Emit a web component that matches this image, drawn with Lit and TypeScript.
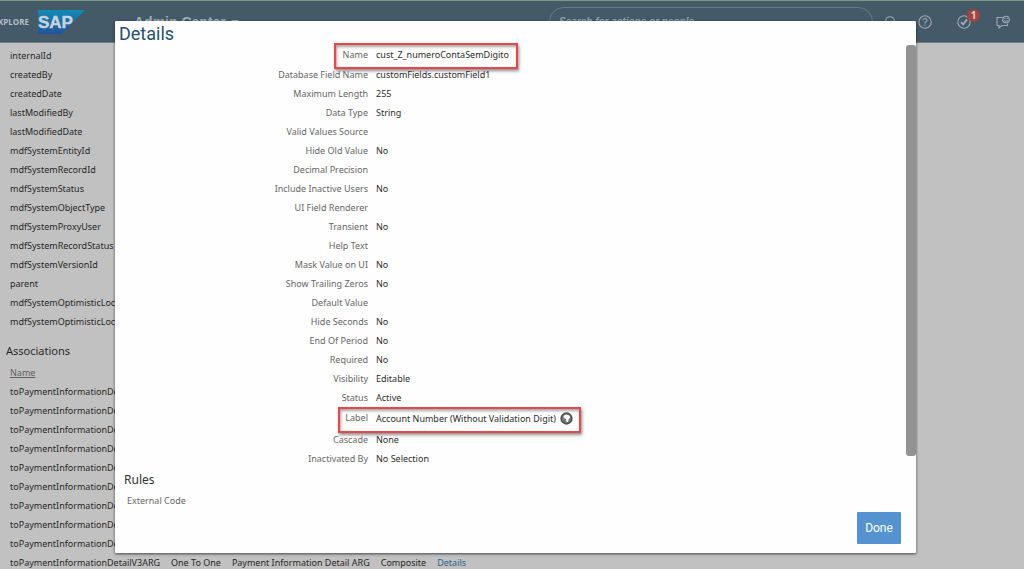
import { LitElement, html, css, svg, nothing } from "lit";
import { customElement, property } from "lit/decorators.js";

interface Field {
  label: string;
  value?: string;
  mark?: "name" | "label";
}

const FIELDS: Field[] = [
  { label: "Name", value: "cust_Z_numeroContaSemDigito", mark: "name" },
  { label: "Database Field Name", value: "customFields.customField1" },
  { label: "Maximum Length", value: "255" },
  { label: "Data Type", value: "String" },
  { label: "Valid Values Source" },
  { label: "Hide Old Value", value: "No" },
  { label: "Decimal Precision" },
  { label: "Include Inactive Users", value: "No" },
  { label: "UI Field Renderer" },
  { label: "Transient", value: "No" },
  { label: "Help Text" },
  { label: "Mask Value on UI", value: "No" },
  { label: "Show Trailing Zeros", value: "No" },
  { label: "Default Value" },
  { label: "Hide Seconds", value: "No" },
  { label: "End Of Period", value: "No" },
  { label: "Required", value: "No" },
  { label: "Visibility", value: "Editable" },
  { label: "Status", value: "Active" },
  { label: "Label", value: "Account Number (Without Validation Digit)", mark: "label" },
  { label: "Cascade", value: "None" },
  { label: "Inactivated By", value: "No Selection" },
];

const SYSTEM_FIELDS = [
  "internalId",
  "createdBy",
  "createdDate",
  "lastModifiedBy",
  "lastModifiedDate",
  "mdfSystemEntityId",
  "mdfSystemRecordId",
  "mdfSystemStatus",
  "mdfSystemObjectType",
  "mdfSystemProxyUser",
  "mdfSystemRecordStatus",
  "mdfSystemVersionId",
  "parent",
  "mdfSystemOptimisticLock",
  "mdfSystemOptimisticLock",
];

const ASSOCIATIONS: string[][] = [
  ...Array.from({ length: 9 }, () => ["toPaymentInformationDetail"]),
  ["toPaymentInformationDetailV3ARG", "One To One", "Payment Information Detail ARG", "Composite"],
];

@customElement("top-bar")
class TopBar extends LitElement {
  static styles = css`
    :host {
      display: block;
    }
    .bar {
      display: flex;
      align-items: center;
      height: 43px;
      box-sizing: border-box;
      border-top: 1px solid #7b9685;
      border-bottom: 1px solid #6d7f8b;
      background: #445a69;
      color: #a9b6bf;
    }
    .explore {
      display: flex;
      justify-content: flex-end;
      width: 29px;
      overflow: hidden;
      font: bold 8px/12px "Open Sans", sans-serif;
      color: #b3bec6;
    }
    .logo {
      margin: 0 0 0 9px;
    }
    .title {
      display: flex;
      align-items: center;
      gap: 5px;
      margin-left: 49px;
      padding: 0;
      border: 0;
      background: none;
      color: #9dadb9;
      font: bold 14px/20px "Liberation Sans", sans-serif;
      white-space: nowrap;
    }
    .search {
      box-sizing: border-box;
      width: 324px;
      height: 29px;
      margin-left: auto;
      padding: 0 9px;
      border: 1px solid #667a88;
      border-radius: 15px;
      background: transparent;
      font: italic bold 10px/20px "Liberation Sans", sans-serif;
    }
    .search::placeholder {
      color: #93a4b0;
      opacity: 1;
    }
    .tools {
      display: flex;
      align-items: center;
      margin-left: 8px;
      padding-right: 12px;
    }
    .tool {
      position: relative;
      display: block;
      width: 18px;
      height: 18px;
      padding: 0;
      border: 0;
      background: none;
    }
    .tool + .tool {
      margin-left: 21px;
    }
    .search-tool + .tool {
      margin-left: 17px;
    }
    .tool svg {
      display: block;
    }
    .badge {
      position: absolute;
      left: 12px;
      top: -4px;
      width: 13px;
      height: 13px;
      border-radius: 50%;
      background: #a3423f;
      color: #dcd0d0;
      font: bold 10px/13px "Open Sans", sans-serif;
      text-align: center;
    }
  `;

  render() {
    const line = (body: unknown) => html`<svg width="18" height="18" viewBox="0 0 18 18" fill="none" stroke="#9aaab5" stroke-width="1.1">${body}</svg>`;
    return html`
      <header class="bar">
        <span class="explore">EXPLORE</span>
        <svg class="logo" width="47" height="24" viewBox="0 0 47 24" role="img" aria-label="SAP">
          <defs>
            <linearGradient id="sap" x1="0" y1="0" x2="0" y2="1">
              <stop offset="0" stop-color="#128bb4" />
              <stop offset="1" stop-color="#22539b" />
            </linearGradient>
          </defs>
          <path d="M0 0H47L23.5 24H0Z" fill="url(#sap)" />
          <text x="0" y="18" font-family="Liberation Sans, sans-serif" font-weight="bold" font-size="17" fill="#c9d3dc" stroke="#c9d3dc" stroke-width="0.4">SAP</text>
        </svg>
        <button class="title">
          Admin Center
          <svg width="8" height="3" viewBox="0 0 8 3"><path d="M0 0H8L4 3Z" fill="#9dadb9" /></svg>
        </button>
        <input class="search" type="search" aria-label="Search" placeholder="Search for actions or people" />
        <div class="tools">
          <button class="tool search-tool" aria-label="Search">
            ${line(svg`<circle cx="9" cy="8" r="4.3"/><path d="M12 11l4 4"/>`)}
          </button>
          <button class="tool" aria-label="Help">
            ${line(svg`<circle cx="9" cy="9" r="6.2"/><path d="M7 7.4C7 4.9 11 4.9 11 7.3C11 8.8 9 8.8 9 10.4M9 11.5V12.8"/>`)}
          </button>
          <button class="tool" aria-label="To-do">
            ${line(svg`<circle cx="9" cy="9" r="6.2"/><path stroke-width="1.9" d="M6 9.2L8.2 11.4L12 6.4"/>`)}
            <span class="badge">1</span>
          </button>
          <button class="tool" aria-label="Feedback">
            ${line(svg`<path d="M8.5 4.5H3V12.5H5V15L7.6 12.5H13.5V10.5"/><circle cx="12" cy="6.5" r="3.3"/><path d="M10.8 4.8V6M13.2 4.8V6M10.3 7.3Q12 9.2 13.7 7.3"/>`)}
          </button>
        </div>
      </header>
    `;
  }
}

@customElement("object-page")
class ObjectPage extends LitElement {
  static styles = css`
    :host {
      display: block;
    }
    .page {
      padding: 3px 6px 0;
      color: #272727;
      font: 9px/19px "Noto Sans", sans-serif;
    }
    table {
      border-collapse: collapse;
      white-space: nowrap;
    }
    td,
    th {
      height: 19px;
      padding: 0 7px 0 4px;
      font-weight: normal;
      text-align: left;
    }
    h2 {
      margin: 11px 0 3px;
      color: #292929;
      font: 11px/18px "Noto Sans", sans-serif;
    }
    .head {
      color: #606060;
      text-decoration: underline;
    }
    a {
      color: #2a648d;
      text-decoration: none;
    }
  `;

  render() {
    return html`
      <main class="page">
        <table>
          ${SYSTEM_FIELDS.map((name) => html`<tr><td>${name}</td></tr>`)}
        </table>
        <h2>Associations</h2>
        <table>
          <tr><th class="head" scope="col">Name</th></tr>
          ${ASSOCIATIONS.map(
            (row) => html`<tr>
              ${row.map((cell) => html`<td>${cell}</td>`)}
              ${row.length > 1 ? html`<td><a href="#details">Details</a></td>` : nothing}
            </tr>`
          )}
        </table>
      </main>
    `;
  }
}

@customElement("details-dialog")
class DetailsDialog extends LitElement {
  @property({ attribute: false }) fields: Field[] = [];

  static styles = css`
    :host {
      display: block;
    }
    .dialog {
      position: relative;
      display: flex;
      flex-direction: column;
      box-sizing: border-box;
      height: 100%;
      background: #fefefe;
      border-radius: 1px;
      box-shadow: 0 1px 3px rgba(0, 0, 0, 0.65);
      color: #2c2c2c;
      font: 9px/19px "Noto Sans", sans-serif;
    }
    h1 {
      margin: 0;
      padding: 2px 4px 0;
      color: #24506f;
      font: 18px/22px "Roboto", sans-serif;
    }
    .body {
      flex: 1;
    }
    dl {
      margin: 0;
    }
    .row {
      position: relative;
      display: grid;
      grid-template-columns: 253px 1fr;
      column-gap: 8px;
      min-height: 19px;
    }
    .row-name {
      min-height: 20px;
    }
    .row-label {
      min-height: 22px;
      margin-top: 1px;
    }
    .row-label dd {
      padding-top: 1px;
    }
    dt {
      color: #666;
      text-align: right;
    }
    dd {
      display: flex;
      align-items: center;
      align-self: start;
      gap: 4px;
      margin: 0;
    }
    .mark {
      position: absolute;
      box-sizing: border-box;
      height: 26px;
      border: 2px solid #e8484b;
      box-shadow: 1px 2px 3px rgba(0, 0, 0, 0.45), inset 1px 2px 3px rgba(0, 0, 0, 0.35);
    }
    .mark-name {
      left: 219px;
      top: -2px;
      width: 184px;
    }
    .mark-label {
      left: 223px;
      top: -1px;
      width: 243px;
    }
    .globe {
      display: block;
      width: 13px;
      height: 13px;
      padding: 0;
      border: 0;
      background: none;
    }
    .globe svg {
      display: block;
    }
    h2 {
      margin: 3px 0 2px 9px;
      color: #333;
      font: 12px/18px "Noto Sans", sans-serif;
    }
    .code {
      margin: 0 0 0 12px;
      color: #666;
    }
    .scroll {
      position: absolute;
      right: 0;
      top: 24px;
      bottom: 97px;
      width: 10px;
      border-radius: 3px;
      background: #929292;
    }
    .foot {
      display: flex;
      justify-content: flex-end;
      padding: 0 15px 9px;
    }
    .done {
      width: 44px;
      height: 32px;
      padding: 0;
      border: 0;
      border-radius: 1px;
      background: #5493cf;
      color: #fff;
      font: 12px/16px "Roboto", sans-serif;
    }
  `;

  render() {
    return html`
      <section class="dialog" role="dialog" aria-labelledby="heading">
        <h1 id="heading">Details</h1>
        <div class="body">
          <dl>
            ${this.fields.map(
              (f) => html`<div class="row ${f.mark ? `row-${f.mark}` : ""}">
                <dt>${f.label}</dt>
                <dd>
                  ${f.value ?? nothing}
                  ${f.mark === "label"
                    ? html`<button class="globe" aria-label="Translations">
                        <svg width="13" height="13" viewBox="0 0 13 13">
                          <circle cx="6.5" cy="6.5" r="5.4" fill="#777" stroke="#4e4e4e" stroke-width="1.5" />
                          <path d="M3.5 4L6 2.6L9.4 3.5L10.2 5.6L8.7 7L8 10L6.6 10.2L6 7L3.8 6Z" fill="#fff" />
                        </svg>
                      </button>`
                    : nothing}
                </dd>
                ${f.mark ? html`<span class="mark mark-${f.mark}"></span>` : nothing}
              </div>`
            )}
          </dl>
          <h2>Rules</h2>
          <p class="code">External Code</p>
        </div>
        <div class="foot"><button class="done">Done</button></div>
        <div class="scroll"></div>
      </section>
    `;
  }
}

@customElement("app-root")
class AppRoot extends LitElement {
  static styles = css`
    :host {
      display: block;
    }
    .screen {
      position: relative;
      height: 100vh;
      overflow: hidden;
      background: #c1c1c1;
    }
    .modal {
      position: absolute;
      inset: 21px 108px 16px 115px;
    }
    details-dialog {
      height: 100%;
    }
  `;

  render() {
    return html`
      <div class="screen">
        <top-bar></top-bar>
        <object-page></object-page>
        <div class="modal"><details-dialog .fields=${FIELDS}></details-dialog></div>
      </div>
    `;
  }
}
